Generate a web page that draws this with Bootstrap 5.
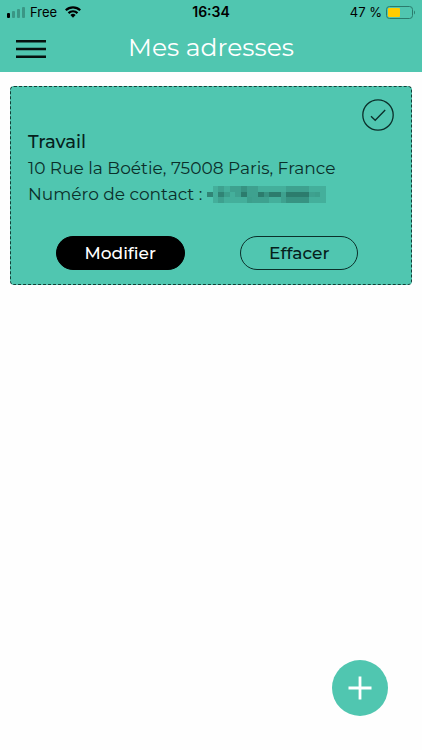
<!DOCTYPE html>
<html lang="fr">
<head>
<meta charset="utf-8">
<meta name="viewport" content="width=device-width, initial-scale=1">
<title>Mes adresses</title>
<link rel="stylesheet" href="https://cdn.jsdelivr.net/npm/bootstrap@5.3.0/dist/css/bootstrap.min.css">
<style>
:root { --mint: #50c6b0; --ink: #0b2f2a; --ink-strong: #06201c; }
body { font-family: Montserrat, Inter, sans-serif; font-variant-ligatures: none; color: var(--ink); background: #fefefe; }
svg { display: block; }
.app-top { background: var(--mint); }
.status-bar { height: 24px; padding: 0 7px; font: 13px/24px Inter, sans-serif; }
.status-side { flex: 1 1 0; }
.status-time { font-size: 14px; }
.title-bar { height: 48px; }
.bar-side { width: 48px; }
.page-title { font-size: 25px; line-height: 46px; font-weight: 400; }
.page-main { padding: 14px 10px; }
.address-card { background: var(--mint); border: 1px dashed #123f37; border-radius: 4px; padding: 12px 17px 14px; font-size: 17px; line-height: 26px; }
.address-name { font-size: 18px; line-height: 26px; font-weight: 500; color: var(--ink-strong); margin-top: -2px; }
.card-actions { margin-top: 29px; }
.pill { height: 34px; padding: 0 28px; border-radius: 17px; font-size: 17px; line-height: 32px; font-weight: 500; }
.pill-dark, .pill-dark:hover { background: #000; border-color: #000; color: #fff; }
.pill-line, .pill-line:hover { border-color: var(--ink); color: var(--ink-strong); }
.masked-number { margin-left: 5px; }
.fab-place { padding: 34px; }
.fab, .fab:hover { width: 56px; height: 56px; background: var(--mint); }
</style>
</head>
<body class="min-vh-100 d-flex flex-column">
<header class="app-top">
  <div class="status-bar d-flex align-items-center text-black">
    <div class="status-side d-flex align-items-center">
      <svg width="19" height="12" viewBox="0 0 19 12" aria-hidden="true"><rect y="7" width="3" height="5" rx="1"/><g fill="#3a9685"><rect x="5" y="5" width="3" height="7" rx="1"/><rect x="10" y="3" width="3" height="9" rx="1"/><rect x="15" y="1" width="3" height="11" rx="1"/></g></svg>
      <span class="ms-1">Free</span>
      <svg class="ms-2" width="16" height="12" viewBox="0 0 16 12" aria-hidden="true"><g fill="none" stroke="#000" stroke-width="2.2"><path d="M.8 4.3a10.2 10.2 0 0 1 14.4 0"/><path d="M3.5 7.1a6.4 6.4 0 0 1 9 0"/></g><path d="M5.4 9a3.7 3.7 0 0 1 5.2 0L8 11.7z"/></svg>
    </div>
    <strong class="status-time fw-semibold">16:34</strong>
    <div class="status-side d-flex align-items-center justify-content-end">
      <span>47 %</span>
      <svg class="ms-1" width="29" height="13" viewBox="0 0 29 13" aria-hidden="true"><rect x=".5" y=".5" width="26" height="12" rx="3" fill="none" stroke="#2b7b6d"/><rect x="2" y="2" width="12" height="9" rx="1" fill="#ffcc00"/><path d="M28 4.5q1 .6 1 2t-1 2z" fill="#2b7b6d"/></svg>
    </div>
  </div>
  <nav class="title-bar d-flex px-3" aria-label="Principal">
    <button class="btn p-0 border-0 rounded-0 bar-side" type="button" aria-label="Menu">
      <svg width="30" height="22" viewBox="0 0 30 22" fill="#06110f" aria-hidden="true"><path d="M0 3h30v2.4H0zM0 10.8h30v2.4H0zM0 18.6h30V21H0z"/></svg>
    </button>
    <h1 class="page-title flex-fill text-center text-white m-0">Mes adresses</h1>
    <div class="bar-side"></div>
  </nav>
</header>
<main class="page-main flex-fill">
  <article class="address-card">
    <div class="d-flex justify-content-end">
      <svg width="32" height="32" viewBox="0 0 32 32" fill="none" stroke="#0b2f2a" stroke-width="1.3" role="img" aria-label="Adresse sélectionnée"><circle cx="16" cy="16" r="15.2"/><path d="M9 17.2l4.2 4.1L23.2 11"/></svg>
    </div>
    <h2 class="address-name mb-0">Travail</h2>
    <p class="m-0">10 Rue la Boétie, 75008 Paris, France</p>
    <div class="d-flex align-items-center">
      <p class="m-0">Numéro de contact :</p>
      <svg class="masked-number" width="119" height="17" viewBox="0 0 21 3" preserveAspectRatio="none" fill="#1d5e52" shape-rendering="crispEdges" role="img" aria-label="Numéro masqué">
        <path opacity=".22" d="M1 0h20v3H1z"/>
        <path opacity=".16" d="M2 0h1v3H2zM4 0h5v1H4zM5 1h14v1H5zM8 2h3v1H8zM13 2h5v1h-5zM14 0h4v1h-4z"/>
        <path opacity=".2" d="M3 1h1v1H3zM6 0h1v2H6zM9 1h4v1H9zM7 2h1v1H7zM14 1h4v2h-4zM19 1h1v1h-1z"/>
        <path opacity=".62" d="M0 1h1v1H0z"/>
        <path opacity=".42" d="M2 1h1v1H2zM6 1h1v1H6zM9 1h1v1H9zM11 1h2v1h-2zM14 1h4v1h-4z"/>
      </svg>
    </div>
    <div class="card-actions d-flex justify-content-around pe-2">
      <button class="btn pill pill-dark" type="button">Modifier</button>
      <button class="btn pill pill-line" type="button">Effacer</button>
    </div>
  </article>
</main>
<div class="fab-place d-flex justify-content-end sticky-bottom">
  <button class="btn fab rounded-circle border-0 p-0 d-flex align-items-center justify-content-center" type="button" aria-label="Ajouter une adresse">
    <svg width="24" height="24" viewBox="0 0 24 24" stroke="#fff" stroke-width="2.8" aria-hidden="true"><path d="M.5 12h23M12 .5v23"/></svg>
  </button>
</div>
<script src="https://cdn.jsdelivr.net/npm/bootstrap@5.3.0/dist/js/bootstrap.bundle.min.js"></script>
</body>
</html>
